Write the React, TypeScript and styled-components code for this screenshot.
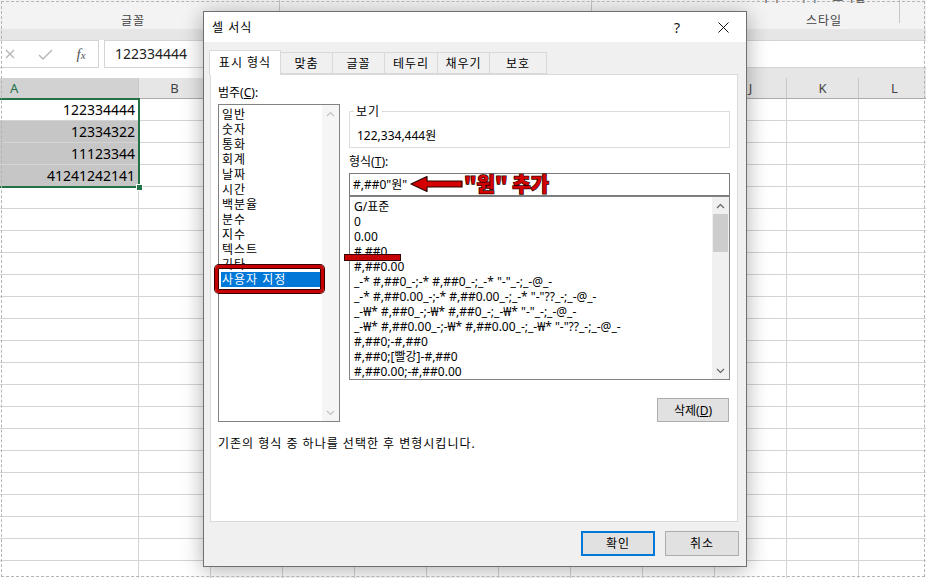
import React from "react";
import styled, { createGlobalStyle } from "styled-components";

const UI_FONT = `"Noto Sans", "Noto Sans CJK KR", sans-serif`;

const GlobalStyle = createGlobalStyle`
  html, body {
    margin: 0;
    padding: 0;
    background: #fff;
    overflow: hidden;
  }
  * {
    box-sizing: border-box;
  }
`;

const GRID_COLS = "139px repeat(11, 72px)";
const COL_NAMES = ["A", "B", "C", "D", "E", "F", "G", "H", "I", "J", "K", "L"];
const VALUES = ["122334444", "12334322", "11123344", "41241242141"];
const ROW_COUNT = 22;

const CATEGORIES = [
  "일반",
  "숫자",
  "통화",
  "회계",
  "날짜",
  "시간",
  "백분율",
  "분수",
  "지수",
  "텍스트",
  "기타",
  "사용자 지정",
];

const FORMATS = [
  "G/표준",
  "0",
  "0.00",
  "#,##0",
  "#,##0.00",
  '_-* #,##0_-;-* #,##0_-;_-* "-"_-;_-@_-',
  '_-* #,##0.00_-;-* #,##0.00_-;_-* "-"??_-;_-@_-',
  '_-₩* #,##0_-;-₩* #,##0_-;_-₩* "-"_-;_-@_-',
  '_-₩* #,##0.00_-;-₩* #,##0.00_-;_-₩* "-"??_-;_-@_-',
  "#,##0;-#,##0",
  "#,##0;[빨강]-#,##0",
  "#,##0.00;-#,##0.00",
];

const TABS: [string, number][] = [
  ["표시 형식", 72],
  ["맞춤", 52],
  ["글꼴", 52],
  ["테두리", 53],
  ["채우기", 52],
  ["보호", 57],
];

const Chevron: React.FC<{ down?: boolean; color: string }> = ({ down, color }) => (
  <svg width="9" height="6" viewBox="0 0 9 6">
    <polyline
      points={down ? "1,1 4.5,4.5 8,1" : "1,5 4.5,1.5 8,5"}
      fill="none"
      stroke={color}
      strokeWidth="1.1"
    />
  </svg>
);

const App: React.FC = () => {
  return (
    <Screen>
      <GlobalStyle />

      <Ribbon>
        <RibbonGroup $w={294} $offset={-14} $sep>
          <GroupLabel>글꼴</GroupLabel>
        </RibbonGroup>
        <RibbonGroup $w={312} $sep>
          <GroupLabel>맞춤</GroupLabel>
        </RibbonGroup>
        <RibbonGroup $w={156}>
          <GroupLabel>표시 형식</GroupLabel>
        </RibbonGroup>
        <RibbonGroup $w={152} $sep>
          <ClippedLabels>
            <span>서식 ˅</span>
            <span>서식 ˅</span>
            <span>스타일 ˅</span>
          </ClippedLabels>
          <GroupLabel>스타일</GroupLabel>
        </RibbonGroup>
        <RibbonGroup $w={40} />
      </Ribbon>
      <Band />

      <FormulaRow>
        <CommandBox>
          <CommandIcon>
            <svg width="10" height="10" viewBox="0 0 10 10">
              <path d="M1 1 L9 9 M9 1 L1 9" stroke="#b5b5b5" strokeWidth="1.3" />
            </svg>
          </CommandIcon>
          <CommandIcon>
            <svg width="15" height="11" viewBox="0 0 15 11">
              <polyline points="1,6 5,10 14,1" fill="none" stroke="#b5b5b5" strokeWidth="1.4" />
            </svg>
          </CommandIcon>
          <CommandIcon>
            <Fx>
              f<small>x</small>
            </Fx>
          </CommandIcon>
        </CommandBox>
        <FormulaInput>122334444</FormulaInput>
      </FormulaRow>
      <FormulaGap>
        <GapPart />
        <GapPart $gray />
      </FormulaGap>

      <HeaderRow>
        {COL_NAMES.map((name, i) => (
          <HeaderCell key={name} $selected={i === 0}>
            {name}
          </HeaderCell>
        ))}
      </HeaderRow>

      <SheetGrid>
        {Array.from({ length: ROW_COUNT }).map((_, r) =>
          COL_NAMES.map((name, c) => (
            <Cell key={`${r}-${name}`} $shaded={c === 0 && r > 0 && r < 4}>
              {c === 0 && r < 4 ? VALUES[r] : ""}
            </Cell>
          ))
        )}
      </SheetGrid>
      <Selection />
      <FillHandle />

      <Dialog>
        <TitleBar>
          <Title>셀 서식</Title>
          <TitleButtons>
            <TitleButton>?</TitleButton>
            <TitleButton>
              <svg width="11" height="11" viewBox="0 0 11 11">
                <path d="M0.5 0.5 L10.5 10.5 M10.5 0.5 L0.5 10.5" stroke="#111" strokeWidth="1" />
              </svg>
            </TitleButton>
          </TitleButtons>
        </TitleBar>

        <DialogBody>
          <TabStrip>
            {TABS.map(([label, w], i) => (
              <Tab key={label} $w={w} $active={i === 0}>
                {label}
              </Tab>
            ))}
          </TabStrip>

          <Panel>
            <PanelGrid>
              <Column>
                <FieldLabel>
                  범주(<u>C</u>):
                </FieldLabel>
                <ListBox $h={318} $mt={4}>
                  <ListItems $padLeft={2} $padTop={2}>
                    {CATEGORIES.map((c, i) => (
                      <ListItem key={c} $spaced $selected={i === CATEGORIES.length - 1}>
                        {c}
                      </ListItem>
                    ))}
                  </ListItems>
                  <ScrollTrack $light>
                    <ScrollArrow>
                      <Chevron color="#c2c2c2" />
                    </ScrollArrow>
                    <ScrollSpace />
                    <ScrollArrow>
                      <Chevron down color="#c2c2c2" />
                    </ScrollArrow>
                  </ScrollTrack>
                </ListBox>
              </Column>

              <Column>
                <GroupBox>
                  <Legend>보기</Legend>
                  <GroupValue>122,334,444원</GroupValue>
                </GroupBox>
                <FieldLabel $mt={6}>
                  형식(<u>T</u>):
                </FieldLabel>
                <FormatInput>#,##0"원"</FormatInput>
                <ListBox $h={184}>
                  <ListItems $padLeft={3} $padTop={2}>
                    {FORMATS.map((f) => (
                      <ListItem key={f}>{f}</ListItem>
                    ))}
                  </ListItems>
                  <ScrollTrack>
                    <ScrollArrow>
                      <Chevron color="#606060" />
                    </ScrollArrow>
                    <ScrollThumb />
                    <ScrollSpace />
                    <ScrollArrow>
                      <Chevron down color="#606060" />
                    </ScrollArrow>
                  </ScrollTrack>
                </ListBox>
                <Button $w={72} $h={24} $mt={18} $alignEnd>
                  삭제(<u>D</u>)
                </Button>
              </Column>
            </PanelGrid>
            <Hint>기존의 형식 중 하나를 선택한 후 변형시킵니다.</Hint>
          </Panel>

          <Footer>
            <Button $w={74} $h={25} $default $spaced>
              확인
            </Button>
            <Button $w={74} $h={25} $spaced>
              취소
            </Button>
          </Footer>
        </DialogBody>
      </Dialog>

      <Highlight />
      <Underline />
      <Arrow width="54" height="18" viewBox="0 0 54 18">
        <polygon
          points="1,9 17,1.5 17,6 52,6 52,12 17,12 17,16.5"
          fill="#d40000"
          stroke="#2a0000"
          strokeWidth="1.2"
          strokeLinejoin="round"
        />
      </Arrow>
      <Callout>"원" 추가</Callout>

      <Frame />
    </Screen>
  );
};

export default App;

const Screen = styled.div`
  position: relative;
  width: 926px;
  height: 578px;
  overflow: hidden;
  background: #fff;
  color: #000;
  font-family: ${UI_FONT};
`;

const Ribbon = styled.div`
  display: flex;
  height: 29px;
  background: #f3f3f3;
`;

const RibbonGroup = styled.div<{ $w: number; $offset?: number; $sep?: boolean }>`
  position: relative;
  flex: 0 0 ${(p) => p.$w}px;
  margin-left: ${(p) => p.$offset ?? 0}px;
  display: flex;
  align-items: flex-end;
  justify-content: center;
  padding-bottom: 1px;

  &::after {
    content: "";
    display: ${(p) => (p.$sep ? "block" : "none")};
    position: absolute;
    right: 0;
    top: 0;
    width: 1px;
    height: 23px;
    background: #c6c6c6;
  }
`;

const GroupLabel = styled.span`
  font-size: 12px;
  line-height: 15px;
  letter-spacing: 1px;
  color: #444;
  white-space: nowrap;
`;

const ClippedLabels = styled.div`
  position: absolute;
  left: 9px;
  top: -10px;
  display: flex;
  gap: 9px;
  font-size: 12px;
  line-height: 15px;
  color: #444;
  white-space: nowrap;
`;

const Band = styled.div`
  height: 11px;
  background: #e6e6e6;
`;

const FormulaRow = styled.div`
  display: flex;
  gap: 5px;
  height: 28px;
  background: #fff;
`;

const CommandBox = styled.div`
  flex: 0 0 99px;
  display: grid;
  grid-template-columns: 20px 50px 22px;
  align-items: center;
  justify-items: center;
  border: 1px solid #d4d4d4;
  border-left: none;
`;

const CommandIcon = styled.div`
  display: flex;
  align-items: center;
  justify-content: center;
`;

const Fx = styled.span`
  font-family: "Liberation Serif", serif;
  font-style: italic;
  font-size: 15px;
  color: #555;

  small {
    font-size: 11px;
  }
`;

const FormulaInput = styled.div`
  flex: 1;
  border: 1px solid #d4d4d4;
  border-right: none;
  padding-left: 10px;
  font-size: 14px;
  line-height: 26px;
  color: #222;
`;

const FormulaGap = styled.div`
  display: flex;
  height: 10px;
`;

const GapPart = styled.div<{ $gray?: boolean }>`
  flex: ${(p) => (p.$gray ? "1" : "0 0 600px")};
  background: ${(p) => (p.$gray ? "#e6e6e6" : "#fff")};
`;

const HeaderRow = styled.div`
  display: grid;
  grid-template-columns: ${GRID_COLS};
  height: 21px;
  background: #e6e6e6;
`;

const HeaderCell = styled.div<{ $selected?: boolean }>`
  border-right: 1px solid #c8c8c8;
  border-bottom: 1px solid #ababab;
  background: ${(p) => (p.$selected ? "#d2d2d2" : "#e6e6e6")};
  color: ${(p) => (p.$selected ? "#217346" : "#444")};
  font-size: 13px;
  line-height: 20px;
  text-align: ${(p) => (p.$selected ? "left" : "center")};
  padding-left: ${(p) => (p.$selected ? "10px" : "0")};
`;

const SheetGrid = styled.div`
  display: grid;
  grid-template-columns: ${GRID_COLS};
  grid-auto-rows: 22px;
`;

const Cell = styled.div<{ $shaded?: boolean }>`
  border-right: 1px solid #d4d4d4;
  border-bottom: 1px solid #d4d4d4;
  background: ${(p) => (p.$shaded ? "#c6c6c6" : "#fff")};
  font-size: 14px;
  line-height: 21px;
  text-align: right;
  padding-right: 3px;
  white-space: nowrap;
  overflow: hidden;
`;

const Selection = styled.div`
  position: absolute;
  left: -3px;
  top: 98px;
  width: 143px;
  height: 90px;
  border: 2px solid #217346;
  pointer-events: none;
`;

const FillHandle = styled.div`
  position: absolute;
  left: 136px;
  top: 184px;
  width: 7px;
  height: 7px;
  background: #217346;
  border: 1px solid #fff;
`;

const Dialog = styled.div`
  position: absolute;
  left: 203px;
  top: 11px;
  width: 544px;
  height: 556px;
  border: 1px solid #6f6f6f;
  background: #f0f0f0;
  box-shadow: 0 3px 20px rgba(0, 0, 0, 0.32);
  display: flex;
  flex-direction: column;
  font-size: 12px;
`;

const TitleBar = styled.div`
  flex: 0 0 30px;
  display: flex;
  align-items: center;
  justify-content: space-between;
  background: #fff;
  padding-left: 8px;
`;

const Title = styled.span`
  font-size: 12px;
  line-height: 15px;
  letter-spacing: 1px;
`;

const TitleButtons = styled.div`
  display: flex;
  height: 100%;
`;

const TitleButton = styled.div`
  width: 46px;
  display: flex;
  align-items: center;
  justify-content: center;
  font-size: 14px;
  color: #111;
`;

const DialogBody = styled.div`
  flex: 1;
  display: flex;
  flex-direction: column;
  padding: 8px 0 0 5px;
`;

const TabStrip = styled.div`
  display: flex;
  align-items: flex-end;
  height: 24px;
`;

const Tab = styled.div<{ $w: number; $active?: boolean }>`
  position: relative;
  z-index: ${(p) => (p.$active ? 1 : 0)};
  flex: 0 0 ${(p) => p.$w}px;
  height: ${(p) => (p.$active ? 25 : 22)}px;
  margin-bottom: ${(p) => (p.$active ? -1 : 0)}px;
  border: 1px solid #d9d9d9;
  border-left: ${(p) => (p.$active ? "1px solid #d9d9d9" : "none")};
  border-bottom: ${(p) => (p.$active ? "none" : "1px solid #d9d9d9")};
  background: ${(p) => (p.$active ? "#fff" : "#f0f0f0")};
  display: flex;
  align-items: center;
  justify-content: center;
  line-height: 15px;
  letter-spacing: 1px;
  padding-bottom: ${(p) => (p.$active ? 1 : 0)}px;
`;

const Panel = styled.div`
  margin-left: 1px;
  width: 528px;
  height: 448px;
  border: 1px solid #d9d9d9;
  background: #fff;
  padding: 10px 7px 0 7px;
`;

const PanelGrid = styled.div`
  display: grid;
  grid-template-columns: 122px 381px;
  column-gap: 9px;
`;

const Column = styled.div`
  display: flex;
  flex-direction: column;
`;

const FieldLabel = styled.div<{ $mt?: number }>`
  margin-top: ${(p) => p.$mt ?? 0}px;
  line-height: 15px;
  height: 15px;

  u {
    text-underline-offset: 1px;
  }
`;

const ListBox = styled.div<{ $h: number; $mt?: number }>`
  display: flex;
  height: ${(p) => p.$h}px;
  margin-top: ${(p) => p.$mt ?? 0}px;
  border: 1px solid #828282;
  background: #fff;
`;

const ListItems = styled.div<{ $padLeft: number; $padTop: number }>`
  flex: 1;
  min-width: 0;
  overflow: hidden;
  padding: ${(p) => p.$padTop}px 1px 0 ${(p) => p.$padLeft}px;
`;

const ListItem = styled.div<{ $selected?: boolean; $spaced?: boolean }>`
  height: 15px;
  line-height: 15px;
  padding-left: 1px;
  white-space: nowrap;
  letter-spacing: ${(p) => (p.$spaced ? "1px" : "0")};
  color: ${(p) => (p.$selected ? "#fff" : "#000")};
  background: ${(p) => (p.$selected ? "#0078d7" : "transparent")};
`;

const ScrollTrack = styled.div<{ $light?: boolean }>`
  flex: 0 0 17px;
  display: flex;
  flex-direction: column;
  background: ${(p) => (p.$light ? "#f5f5f5" : "#f0f0f0")};
`;

const ScrollArrow = styled.div`
  flex: 0 0 17px;
  display: flex;
  align-items: center;
  justify-content: center;
`;

const ScrollThumb = styled.div`
  flex: 0 0 38px;
  margin: 0 1px;
  background: #cdcdcd;
`;

const ScrollSpace = styled.div`
  flex: 1;
`;

const GroupBox = styled.div`
  position: relative;
  margin-top: 26px;
  height: 37px;
  border: 1px solid #dcdcdc;
  padding: 16px 0 0 7px;
`;

const Legend = styled.span`
  position: absolute;
  left: 4px;
  top: -8px;
  padding: 0 2px;
  background: #fff;
  line-height: 15px;
  letter-spacing: 1px;
`;

const GroupValue = styled.div`
  line-height: 15px;
`;

const FormatInput = styled.div`
  margin-top: 4px;
  height: 23px;
  border: 1px solid #7a7a7a;
  padding-left: 3px;
  line-height: 21px;
`;

const Button = styled.div<{
  $w: number;
  $h: number;
  $mt?: number;
  $default?: boolean;
  $alignEnd?: boolean;
  $spaced?: boolean;
}>`
  width: ${(p) => p.$w}px;
  height: ${(p) => p.$h}px;
  margin-top: ${(p) => p.$mt ?? 0}px;
  margin-right: ${(p) => (p.$alignEnd ? 1 : 0)}px;
  align-self: ${(p) => (p.$alignEnd ? "flex-end" : "auto")};
  display: flex;
  align-items: center;
  justify-content: center;
  background: #e1e1e1;
  border: ${(p) => (p.$default ? "2px solid #0078d7" : "1px solid #adadad")};
  line-height: 15px;
  letter-spacing: ${(p) => (p.$spaced ? "1px" : "0")};
`;

const Hint = styled.div`
  margin-top: 14px;
  line-height: 15px;
  letter-spacing: 1px;
`;

const Footer = styled.div`
  display: flex;
  justify-content: flex-end;
  gap: 10px;
  margin-top: 9px;
  padding-right: 7px;
`;

const Highlight = styled.div`
  position: absolute;
  left: 215px;
  top: 265px;
  width: 109px;
  height: 28px;
  border: 3px solid #c40000;
  border-radius: 4px;
  box-shadow: 0 0 0 1px #3a0000, inset 0 0 0 1px #3a0000;
  pointer-events: none;
`;

const Underline = styled.div`
  position: absolute;
  left: 345px;
  top: 255px;
  width: 55px;
  height: 5px;
  background: #c40000;
  box-shadow: 0 0 0 1px #3a0000;
`;

const Arrow = styled.svg`
  position: absolute;
  left: 410px;
  top: 175px;
`;

const Callout = styled.div`
  position: absolute;
  left: 464px;
  top: 171px;
  font-family: "Noto Sans CJK KR", sans-serif;
  font-weight: 900;
  font-size: 20px;
  line-height: 26px;
  color: #d40000;
  -webkit-text-stroke: 1.4px #2a0000;
  paint-order: stroke fill;
  white-space: nowrap;
`;

const Frame = styled.div`
  position: absolute;
  left: 1px;
  top: 1px;
  width: 924px;
  height: 576px;
  border: 1px dashed #b4b4b4;
  pointer-events: none;
`;
